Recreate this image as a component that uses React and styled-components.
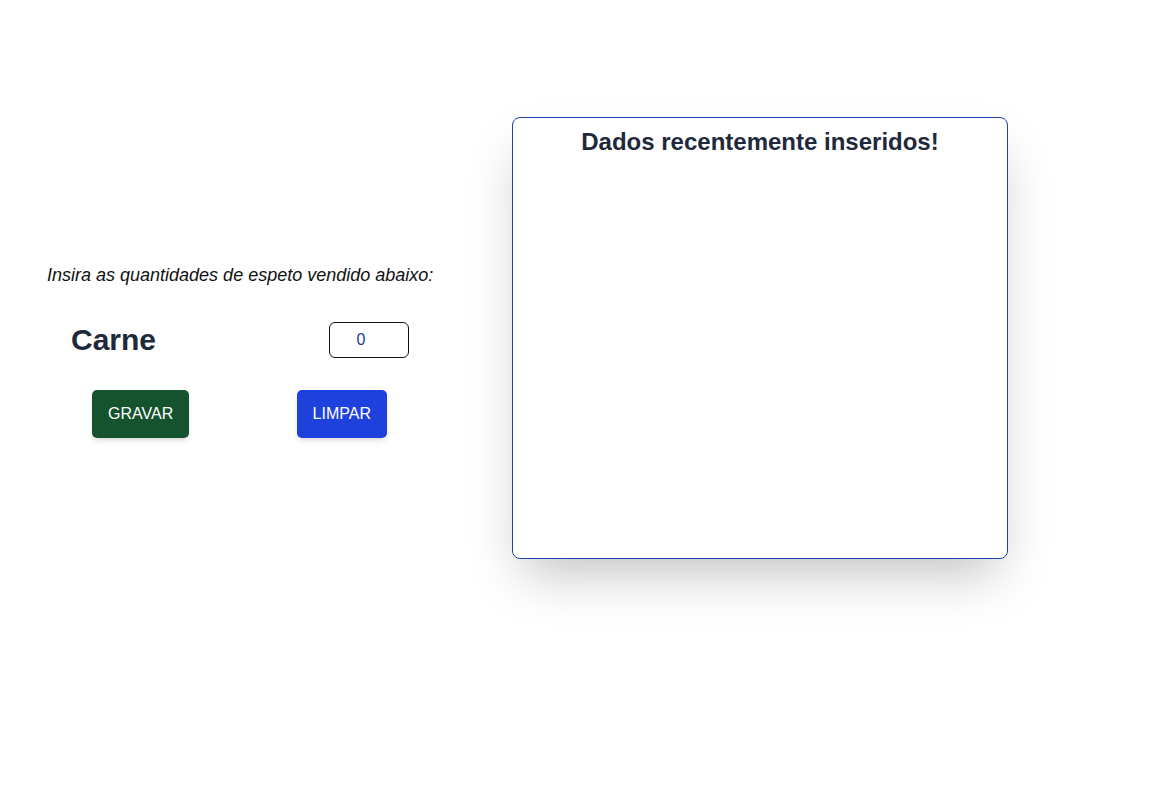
import styled, { createGlobalStyle } from 'styled-components';

const GlobalStyle = createGlobalStyle`
  body {
    margin: 0;
    background: #ffffff;
    font-family: 'Liberation Sans', Arial, sans-serif;
  }
`;

const Page = styled.main`
  box-sizing: border-box;
  min-height: 100vh;
  display: flex;
  align-items: flex-start;
  padding: 117px 0 0 47px;
  gap: 80px;
`;

const Form = styled.section`
  width: 385px;
  margin-top: 148px;
  display: flex;
  flex-direction: column;
`;

const Hint = styled.p`
  margin: 0;
  font-size: 18px;
  font-style: italic;
  color: #111111;
  text-align: center;
  white-space: nowrap;
`;

const Field = styled.div`
  display: flex;
  align-items: center;
  justify-content: space-between;
  padding: 0 23px 0 24px;
  margin-top: 36px;
`;

const Label = styled.label`
  font-size: 30px;
  font-weight: 700;
  color: #1e293b;
`;

const Input = styled.input`
  box-sizing: border-box;
  width: 80px;
  height: 36px;
  padding: 0 16px 0 0;
  border: 1px solid #111111;
  border-radius: 6px;
  text-align: center;
  font-family: inherit;
  font-size: 16px;
  color: #1e3a8a;
  outline: none;
`;

const Actions = styled.div`
  display: flex;
  justify-content: space-between;
  padding: 0 45px;
  margin-top: 32px;
`;

const Button = styled.button`
  height: 48px;
  padding: 0 16px;
  border: none;
  border-radius: 5px;
  background: ${(p) => p.$bg};
  color: #ffffff;
  font-family: inherit;
  font-size: 16px;
  text-transform: uppercase;
  box-shadow: 0 4px 6px -1px rgba(0, 0, 0, 0.1), 0 2px 4px -2px rgba(0, 0, 0, 0.1);
  cursor: pointer;
`;

const Panel = styled.section`
  box-sizing: border-box;
  width: 496px;
  height: 442px;
  border: 1px solid #1e40af;
  border-radius: 8px;
  background: #ffffff;
  box-shadow: 0 25px 50px -12px rgba(0, 0, 0, 0.25);
  padding-top: 10px;
`;

const Title = styled.h2`
  margin: 0;
  font-size: 24px;
  font-weight: 700;
  color: #1e293b;
  text-align: center;
`;

const App = () => {
  return (
    <>
      <GlobalStyle />
      <Page>
        <Form>
          <Hint>Insira as quantidades de espeto vendido abaixo:</Hint>
          <Field>
            <Label htmlFor="carne">Carne</Label>
            <Input id="carne" type="text" defaultValue="0" />
          </Field>
          <Actions>
            <Button type="button" $bg="#14532d">
              Gravar
            </Button>
            <Button type="button" $bg="#1e40dc">
              Limpar
            </Button>
          </Actions>
        </Form>
        <Panel>
          <Title>Dados recentemente inseridos!</Title>
        </Panel>
      </Page>
    </>
  );
};

export default App;
